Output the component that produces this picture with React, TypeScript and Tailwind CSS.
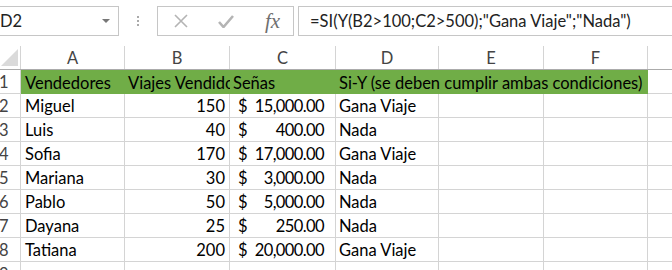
import React from 'react';

const FONT = { fontFamily: 'Lato, "Liberation Sans", sans-serif' };

// column widths incl. right grid line
const COLS = [
  { key: 'A', w: 'w-[104px]' },
  { key: 'B', w: 'w-[105px]' },
  { key: 'C', w: 'w-[106px]' },
  { key: 'D', w: 'w-[103px]' },
  { key: 'E', w: 'w-[105px]' },
  { key: 'F', w: 'w-[104px]' },
];

type Row = { n: number; name: string; trips: string; amount: string; result: string };

const ROWS: Row[] = [
  { n: 2, name: 'Miguel', trips: '150', amount: '15,000.00', result: 'Gana Viaje' },
  { n: 3, name: 'Luis', trips: '40', amount: '400.00', result: 'Nada' },
  { n: 4, name: 'Sofia', trips: '170', amount: '17,000.00', result: 'Gana Viaje' },
  { n: 5, name: 'Mariana', trips: '30', amount: '3,000.00', result: 'Nada' },
  { n: 6, name: 'Pablo', trips: '50', amount: '5,000.00', result: 'Nada' },
  { n: 7, name: 'Dayana', trips: '25', amount: '250.00', result: 'Nada' },
  { n: 8, name: 'Tatiana', trips: '200', amount: '20,000.00', result: 'Gana Viaje' },
];

function RowHeader({ n }: { n: number | string }) {
  return (
    <div className="w-[21px] shrink-0 h-full border-r border-[#d4d4d4] text-[#444] flex items-end pb-[3px] overflow-hidden">
      <span className="-ml-[1px]">{n}</span>
    </div>
  );
}

function FormulaBar() {
  return (
    <div className="h-[46px] flex items-start pt-[6px] bg-white">
      {/* name box */}
      <div className="-ml-[2px] w-[121px] h-[30px] border border-[#c6c6c6] flex items-center justify-between pl-[1px] pr-[8px] text-[#222]">
        <span>D2</span>
        <svg width="8" height="4" viewBox="0 0 8 4">
          <path d="M0 0 H8 L4 4 Z" fill="#777" />
        </svg>
      </div>
      {/* dots */}
      <div className="w-[38px] h-[30px] flex flex-col items-center justify-center gap-[2px]">
        <div className="w-[2px] h-[2px] bg-[#aaa]" />
        <div className="w-[2px] h-[2px] bg-[#aaa]" />
        <div className="w-[2px] h-[2px] bg-[#aaa]" />
      </div>
      {/* buttons */}
      <div className="w-[137px] h-[30px] border border-[#c6c6c6] flex items-center">
        <div className="w-[46px] flex justify-center">
          <svg width="14" height="14" viewBox="0 0 14 14">
            <path d="M1 1 L13 13 M13 1 L1 13" stroke="#b4b4b4" strokeWidth="1.6" />
          </svg>
        </div>
        <div className="w-[44px] flex justify-center">
          <svg width="16" height="13" viewBox="0 0 16 13">
            <path d="M1 7 L5.5 12 L15 1" stroke="#b4b4b4" strokeWidth="2.6" fill="none" />
          </svg>
        </div>
        <div className="flex-1 flex justify-center pl-[4px]">
          <span className="text-[21px] italic text-[#6f6f6f]" style={{ fontFamily: '"Liberation Serif", serif' }}>
            fx
          </span>
        </div>
      </div>
      {/* formula input */}
      <div className="ml-[4px] flex-1 h-[30px] border border-r-0 border-[#c6c6c6] flex items-center pl-[11px] text-[#222] whitespace-nowrap overflow-hidden">
        =SI(Y(B2&gt;100;C2&gt;500);"Gana Viaje";"Nada")
      </div>
    </div>
  );
}

export default function App() {
  return (
    <div className="w-[672px] h-[270px] bg-white overflow-hidden text-[16.5px] leading-none" style={FONT}>
      <FormulaBar />

      {/* column headers */}
      <div className="h-[24px] flex border-b border-[#ababab]">
        <div className="w-[21px] shrink-0 h-full border-r border-[#d4d4d4] relative overflow-hidden">
          <svg className="absolute left-[1px] top-[3px]" width="17" height="17" viewBox="0 0 17 17">
            <path d="M17 0 V17 H0 Z" fill="#dadada" />
          </svg>
        </div>
        {COLS.map((c) => (
          <div
            key={c.key}
            className={`${c.w} shrink-0 h-full border-r border-[#d4d4d4] flex items-end justify-center pb-[3px] text-[#444]`}
          >
            {c.key}
          </div>
        ))}
        <div className="flex-1" />
      </div>

      {/* row 1 */}
      <div className="h-[24px] flex border-b border-[#d4d4d4]">
        <RowHeader n={1} />
        <div className="w-[627px] shrink-0 h-[24px] -mb-[1px] bg-[#70ad47] flex text-black">
          <div className="w-[104px] shrink-0 flex items-end pb-[3px] pl-[4px] whitespace-nowrap overflow-hidden">
            Vendedores
          </div>
          <div className="w-[105px] shrink-0 flex items-end pb-[3px] pl-[3px] whitespace-nowrap overflow-hidden">
            Viajes Vendidos
          </div>
          <div className="w-[106px] shrink-0 flex items-end pb-[3px] pl-[3px] whitespace-nowrap overflow-hidden">
            Señas
          </div>
          <div className="w-[103px] shrink-0 flex items-end pb-[3px] pl-[3px] whitespace-nowrap">
            Si-Y (se deben cumplir ambas condiciones)
          </div>
        </div>
        <div className="flex-1" />
      </div>

      {/* data rows */}
      {[...ROWS, null].map((r, i) => (
        <div key={i} className="h-[24px] flex border-b border-[#d4d4d4] text-black">
          <RowHeader n={r ? r.n : 9} />
          <div className="w-[104px] shrink-0 border-r border-[#d4d4d4] flex items-end pb-[3px] pl-[4px] whitespace-nowrap overflow-hidden">
            {r?.name}
          </div>
          <div className="w-[105px] shrink-0 border-r border-[#d4d4d4] flex items-end justify-end pb-[3px] pr-[4px]">
            {r?.trips}
          </div>
          <div className="w-[106px] shrink-0 border-r border-[#d4d4d4] flex items-end justify-between pb-[3px] pl-[8px] pr-[11px]">
            {r && (
              <>
                <span>$</span>
                <span className="tracking-[-0.6px]">{r.amount}</span>
              </>
            )}
          </div>
          <div className="w-[103px] shrink-0 border-r border-[#d4d4d4] flex items-end pb-[3px] pl-[3px] whitespace-nowrap">
            {r?.result}
          </div>
          <div className="w-[105px] shrink-0 border-r border-[#d4d4d4]" />
          <div className="w-[104px] shrink-0 border-r border-[#d4d4d4]" />
          <div className="flex-1" />
        </div>
      ))}
    </div>
  );
}
